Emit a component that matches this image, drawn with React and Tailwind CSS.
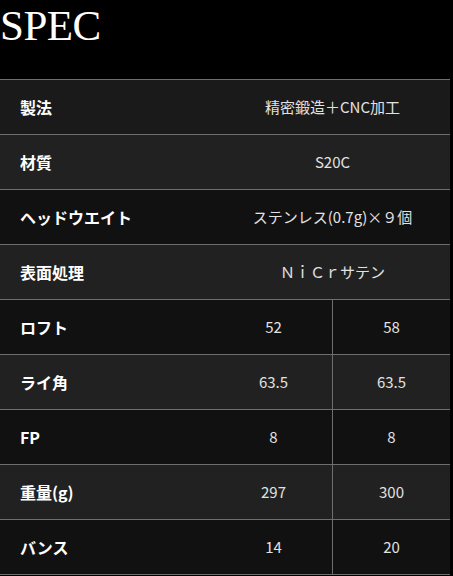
const rows = [
  { label: '製法', value: '精密鍛造＋CNC加工', bg: 'bg-[#1a1a1a]' },
  { label: '材質', value: 'S20C', bg: 'bg-[#212121]' },
  { label: 'ヘッドウエイト', value: 'ステンレス(0.7g)×９個', bg: 'bg-[#111111]' },
  { label: '表面処理', value: 'ＮｉＣｒサテン', bg: 'bg-[#212121]' },
  { label: 'ロフト', values: ['52', '58'], bg: 'bg-[#111111]' },
  { label: 'ライ角', values: ['63.5', '63.5'], bg: 'bg-[#212121]' },
  { label: 'FP', values: ['8', '8'], bg: 'bg-[#111111]' },
  { label: '重量(g)', values: ['297', '300'], bg: 'bg-[#212121]' },
  { label: 'バンス', values: ['14', '20'], bg: 'bg-[#111111]' },
]

export default function App() {
  return (
    <main className="min-h-screen w-[453px] bg-black font-['Noto_Sans_CJK_JP',sans-serif]">
      {/* 見出し */}
      <div className="h-[79px]">
        <h1 className="font-['Liberation_Serif',serif] text-[43px] leading-[52px] text-white tracking-[-0.5px]">
          SPEC
        </h1>
      </div>

      {/* スペック表 */}
      <div className="w-[450px] border-t border-[#6e6e6e]">
        {rows.map((row) => (
          <div key={row.label} className={`flex h-[55px] border-b border-[#6e6e6e] ${row.bg}`}>
            <div className="w-[215px] flex items-center pl-5 text-[16px] font-bold text-white">
              {row.label}
            </div>
            {row.values ? (
              <>
                <div className="w-[117px] flex items-center justify-center text-[15px] text-[#e2e2e2]">
                  {row.values[0]}
                </div>
                <div className="w-[118px] flex items-center justify-center border-l border-[#6e6e6e] text-[15px] text-[#e2e2e2]">
                  {row.values[1]}
                </div>
              </>
            ) : (
              <div className="flex-1 flex items-center justify-center text-[15px] text-[#e2e2e2]">
                {row.value}
              </div>
            )}
          </div>
        ))}
      </div>
    </main>
  )
}
